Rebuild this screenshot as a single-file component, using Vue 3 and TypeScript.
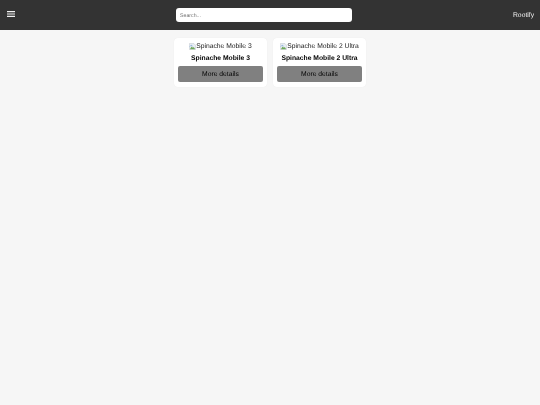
<script setup lang="ts">
interface Product { name: string }
const products: Product[] = [{ name: 'Spinache Mobile 3' }, { name: 'Spinache Mobile 2 Ultra' }]
</script>

<template>
  <div class="page">
    <header class="topbar">
      <button class="menu" aria-label="Menu">
        <svg width="8" height="6" viewBox="0 0 8 6"><path d="M0 0h8v1.2H0zM0 2.4h8v1.2H0zM0 4.8h8v1.2H0z" fill="#f2f2f2" /></svg>
      </button>
      <div class="search"><input class="search-input" type="text" placeholder="Search..." /></div>
      <span class="brand">Rootify</span>
    </header>
    <main class="grid">
      <article v-for="p in products" :key="p.name" class="card">
        <div class="pic">
          <svg class="broken" width="7" height="7" viewBox="0 0 16 16">
            <path d="M1 1h10l4 4v10H1z" fill="#e8edf3" stroke="#b5bcc4" />
            <path d="M2 14l4-6 3 3 2-2 3 5z" fill="#6fa85c" />
            <path d="M2 8l3-3 3 2" fill="none" stroke="#7fa6dc" stroke-width="2" />
          </svg><span>{{ p.name }}</span>
        </div>
        <h3 class="name">{{ p.name }}</h3>
        <button class="details">More details</button>
      </article>
    </main>
  </div>
</template>

<style>
html, body { margin: 0; background: #f6f6f6; }
</style>

<style scoped>
.page {
  width: 540px;
  height: 405px;
  background: #f6f6f6;
  font-family: "Liberation Sans", Arial, sans-serif;
  text-rendering: geometricPrecision;
  overflow: hidden;
  filter: blur(0.3px);
}
.topbar {
  height: 30px;
  background: #333;
  display: flex;
  align-items: center;
  justify-content: space-between;
  padding: 0 6px 0 7px;
  box-sizing: border-box;
}
.menu {
  background: none;
  border: 0;
  padding: 0;
  width: 8px;
  height: 6px;
  display: flex;
  margin-top: -2px;
}
.search { width: 176px; }
.search-input {
  display: block;
  box-sizing: border-box;
  width: 100%;
  height: 14px;
  border: 0;
  border-radius: 3px;
  padding: 1px 4px 0;
  background: #fff;
  font: 5.25px "Liberation Sans", Arial, sans-serif;
  text-rendering: geometricPrecision;
  outline: 0;
}
.search-input::placeholder { color: #757575; opacity: 1; }
.brand { color: #f2f2f2; font-size: 6.75px; width: 21px; white-space: nowrap; }
.grid {
  display: flex;
  justify-content: center;
  gap: 6px;
  padding-top: 8px;
}
.card {
  width: 93px;
  height: 49px;
  box-sizing: border-box;
  background: #fff;
  border-radius: 4px;
  box-shadow: 0 0 1px rgba(0, 0, 0, 0.08);
  padding: 4px 4px 0;
  text-align: center;
}
.pic {
  display: flex;
  justify-content: center;
  align-items: center;
  height: 8px;
  padding-top: 0.5px;
  margin-bottom: -0.5px;
  font-size: 6.75px;
  color: #222;
  white-space: nowrap;
}
.broken { flex: none; }
.name {
  margin: 4px 0 0;
  height: 9px;
  font-size: 6.75px;
  line-height: 9px;
  font-weight: 700;
  color: #000;
  white-space: nowrap;
}
.details {
  display: block;
  width: 85px;
  height: 16px;
  margin: 3px 0 0;
  padding: 0;
  border: 0;
  border-radius: 2px;
  background: #808080;
  color: #000;
  font: 6.75px "Liberation Sans", Arial, sans-serif;
  text-rendering: geometricPrecision;
}
</style>
